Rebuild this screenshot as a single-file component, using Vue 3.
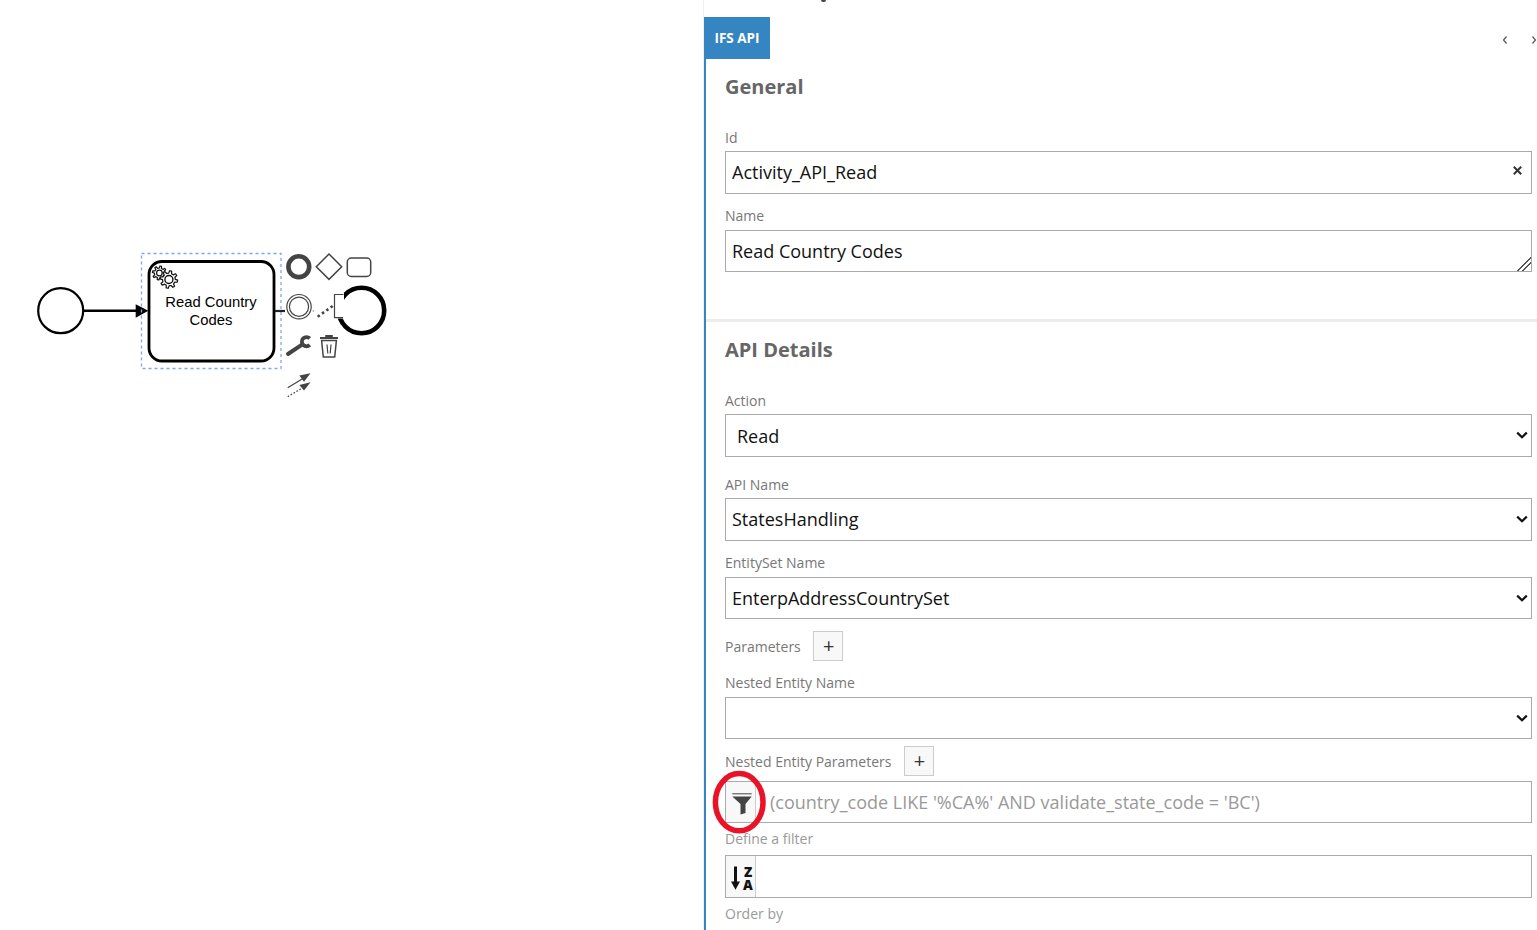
<script setup>
const gear = (cx, cy, ro, ri, n) => {
  const pts = []
  const step = (Math.PI * 2) / n
  for (let i = 0; i < n; i++) {
    const a = i * step + step / 4
    const w = step * 0.22
    const p = (r, t) => `${(cx + r * Math.cos(t)).toFixed(2)} ${(cy + r * Math.sin(t)).toFixed(2)}`
    pts.push(p(ri, a - w * 1.3), p(ro, a - w * 0.7), p(ro, a + w * 0.7), p(ri, a + w * 1.3))
  }
  return 'M' + pts.join('L') + 'Z'
}
const gearBack = gear(159.4, 273, 7, 5, 8)
const gearFront = gear(168.9, 279.5, 8.8, 6.4, 8)
</script>

<template>
  <div class="page">
    <div class="canvas">
      <svg class="diagram" width="703" height="930" viewBox="0 0 703 930">
        <circle cx="60.7" cy="310.7" r="22.5" class="ev" />
        <path d="M84 310.7H138" class="flow" />
        <path d="M135.7 304.3V317.7L148.3 310.7Z" fill="#000" />
        <rect x="149" y="261.5" width="125" height="99.5" rx="13" class="task" />
        <path :d="gearBack" class="gear" />
        <circle cx="159.4" cy="273" r="2.8" class="gear" />
        <path :d="gearFront" class="gear" />
        <circle cx="168.9" cy="279.5" r="4" class="gear hub" />
        <text x="211" y="307" class="label">Read Country</text>
        <text x="211" y="325" class="label">Codes</text>
        <rect x="141.5" y="253.5" width="139.5" height="115" class="select-box" />
        <path d="M275 311H285" stroke="#222" stroke-width="2.2" fill="none" />

        <circle cx="361.5" cy="310.5" r="22.7" class="end" />
        <rect x="331" y="293" width="13" height="25.5" fill="#fff" />
        <path d="M343.5 294.5H334.5V317.7H343" class="pad thin" />

        <circle cx="298.8" cy="266.7" r="10.4" fill="#fff" stroke="#444" stroke-width="4.6" />
        <path d="M329 254L341.7 266.7L329 279.4L316.3 266.7Z" class="pad" />
        <rect x="347.3" y="258" width="23.4" height="18.4" rx="4" class="pad" />
        <circle cx="299" cy="306.7" r="12.2" class="pad thin" />
        <circle cx="299" cy="306.7" r="9.6" class="pad thin" />
        <path d="M313.3 311h.1" stroke="#999" stroke-width="1.6" stroke-linecap="round" />
        <path d="M317.7 316.7L333 305.8" stroke="#444" stroke-width="2.6" stroke-dasharray="2.5 2.8" fill="none" />

        <path d="M288 354L302 344.6" stroke="#444" stroke-width="4" stroke-linecap="round" fill="none" />
        <path d="M309.75 338.45A4.6 4.6 0 1 0 309.75 344.95" stroke="#444" stroke-width="3.8" fill="none" />

        <path d="M325.2 338V335H332.8V338Z" fill="#444" />
        <path d="M320 338H338" stroke="#444" stroke-width="2" />
        <path d="M321.6 340.5L323.3 357H334.7L336.4 340.5Z" class="pad body-stroke" />
        <path d="M327 344.5L327.8 353.5M331 344.5L330.2 353.5" stroke="#444" stroke-width="1.2" fill="none" />

        <path d="M287.7 387.7L303 378.4" stroke="#444" stroke-width="1.2" fill="none" />
        <path d="M310.5 373.3L299.3 375.4L304 381.8Z" fill="#444" />
        <path d="M287.7 396.7L303 387.5" stroke="#444" stroke-width="1.2" stroke-dasharray="1.6 1.8" fill="none" />
        <path d="M310.5 382.3L299.3 385L304 390.5Z" fill="#444" />
      </svg>
    </div>

    <aside class="panel">
      <span class="clip-mark"></span>
      <div class="tabs">
        <div class="tab">IFS API</div>
        <div class="arrows">
          <svg width="6" height="10" viewBox="0 0 6 10"><path d="M4.5 1.5L1.5 5L4.5 8.5" /></svg>
          <svg width="6" height="10" viewBox="0 0 6 10"><path d="M1.5 1.5L4.5 5L1.5 8.5" /></svg>
        </div>
      </div>

      <div class="body">
        <section class="group general">
          <h2 class="title">General</h2>
          <div class="field">
            <label class="lbl" for="f-id">Id</label>
            <div class="clearable">
              <input id="f-id" class="ctl" type="text" value="Activity_API_Read" />
              <svg class="clear" width="9" height="9" viewBox="0 0 9 9"><path d="M.8.8L8.2 8.2M8.2.8L.8 8.2" /></svg>
            </div>
          </div>
          <div class="field">
            <label class="lbl" for="f-name">Name</label>
            <textarea id="f-name" class="ctl area">Read Country Codes</textarea>
          </div>
        </section>

        <section class="group api">
          <h2 class="title">API Details</h2>
          <div class="field action">
            <label class="lbl" for="f-action">Action</label>
            <select id="f-action" class="ctl sel wide"><option>Read</option></select>
          </div>
          <div class="field api-name">
            <label class="lbl" for="f-api">API Name</label>
            <select id="f-api" class="ctl sel up"><option>StatesHandling</option></select>
          </div>
          <div class="field tight">
            <label class="lbl" for="f-set">EntitySet Name</label>
            <select id="f-set" class="ctl sel"><option>EnterpAddressCountrySet</option></select>
          </div>
          <div class="row params">
            <span class="lbl">Parameters</span>
            <button class="plus" type="button">+</button>
          </div>
          <div class="field tight nested">
            <label class="lbl" for="f-nested">Nested Entity Name</label>
            <select id="f-nested" class="ctl sel"><option></option></select>
          </div>
          <div class="row nested-params">
            <span class="lbl">Nested Entity Parameters</span>
            <button class="plus" type="button">+</button>
          </div>
          <div class="igroup filter">
            <span class="addon">
              <svg width="22" height="26" viewBox="0 0 22 26">
                <path d="M2.3 4.8H21.7" stroke="#444" stroke-width="1" fill="none" />
                <path d="M2.3 7.5H21.7L15.5 15V24L10.5 25.5V15Z" fill="#444" />
              </svg>
            </span>
            <input class="bare" type="text" placeholder="(country_code LIKE '%CA%' AND validate_state_code = 'BC')" />
          </div>
          <div class="hint first">Define a filter</div>
          <div class="igroup order">
            <span class="addon">
              <svg width="22" height="28" viewBox="0 0 22 28">
                <path d="M5.5 4.5V20" stroke="#111" stroke-width="3" fill="none" />
                <path d="M1 19.5H10L5.5 27.7Z" fill="#111" />
                <text x="18" y="15" class="sort-letter">Z</text>
                <text x="18" y="28" class="sort-letter">A</text>
              </svg>
            </span>
            <input class="bare" type="text" />
          </div>
          <div class="hint second">Order by</div>
        </section>
      </div>

      <svg class="ring" width="60" height="68" viewBox="0 0 60 68">
        <ellipse cx="28.2" cy="33.2" rx="23.8" ry="28.6" />
      </svg>
    </aside>
  </div>
</template>

<style scoped>
.page {
  display: flex;
  height: 930px;
  overflow: hidden;
  background: #fff;
  font-family: "Open Sans", "Liberation Sans", sans-serif;
}
.canvas {
  box-sizing: border-box;
  width: 704px;
  flex: none;
  border-right: 1px solid #eee;
}
.diagram { display: block; }
.ev { fill: #fff; stroke: #000; stroke-width: 2.2; }
.flow { stroke: #000; stroke-width: 2.4; fill: none; }
.task { fill: #fff; stroke: #000; stroke-width: 2.8; }
.gear { fill: #fff; stroke: #111; stroke-width: 1.2; stroke-linejoin: round; }
.gear.hub { stroke-width: 1.4; }
.label { font-family: "Liberation Sans", Arial, sans-serif; font-size: 14.8px; text-anchor: middle; fill: #000; }
.select-box { fill: none; stroke: #7fa6f5; stroke-width: 1.3; stroke-dasharray: 3 3; }
.end { fill: #fff; stroke: #000; stroke-width: 4.6; }
.pad { fill: #fff; stroke: #444; stroke-width: 1.5; }
.pad.thin { fill: none; stroke-width: 1.2; }
.pad.body-stroke { fill: none; stroke-width: 1.5; }

.panel {
  position: relative;
  flex: 1;
  min-width: 0;
  display: flex;
  flex-direction: column;
  padding-top: 17px;
}
.clip-mark {
  position: absolute;
  left: 117px;
  top: 0;
  width: 5px;
  height: 1.5px;
  border-radius: 0 0 2px 2px;
  background: #444;
}
.tabs {
  display: flex;
  align-items: center;
  justify-content: space-between;
  height: 42px;
  flex: none;
}
.tab {
  width: 66px;
  height: 42px;
  line-height: 42px;
  text-align: center;
  background: #3485c2;
  color: #fff;
  font-size: 13.5px;
  font-weight: 700;
}
.arrows { display: flex; gap: 23px; margin-top: 4px; }
.arrows svg { display: block; }
.arrows path { fill: none; stroke: #555; stroke-width: 1.2; }

.body {
  flex: 1;
  border-left: 2px solid #3485c2;
  min-height: 0;
}
.group { padding: 0 5px 0 19px; }
.general {
  padding-top: 14px;
  height: 246px;
  border-bottom: 3px solid #ececec;
}
.api { padding-top: 14px; }
.title {
  margin: 0;
  height: 28px;
  line-height: 28px;
  font-size: 20px;
  font-weight: 700;
  color: #666;
}
.general .title { margin-bottom: 26.8px; }
.api .title { margin-bottom: 26.8px; }
.field { margin-bottom: 12.8px; }
.field.action { margin-bottom: 18.4px; }
.field.api-name { margin-bottom: 12.4px; }
.field.tight { margin-bottom: 12px; }
.field.nested { margin-bottom: 7px; }
.lbl {
  display: block;
  height: 20px;
  line-height: 20px;
  margin-bottom: 3.4px;
  font-size: 14px;
  color: #777;
}
.clearable { position: relative; }
.clear { position: absolute; right: 10px; top: 15px; }
.clear path { fill: none; stroke: #333; stroke-width: 2; }
.ctl {
  display: block;
  box-sizing: border-box;
  width: 100%;
  height: 42.4px;
  padding: 0 6px;
  border: 1px solid #aaa;
  border-radius: 0;
  background: #fff;
  color: #111;
  font-family: inherit;
  font-size: 18px;
  outline: none;
}
.area { padding-top: 7px; line-height: 26px; resize: vertical; }
.area::-webkit-resizer {
  background: linear-gradient(135deg, transparent 51%, #555 51%, #555 59%, transparent 59%, transparent 68%, #555 68%, #555 76%, transparent 76%);
}
.sel {
  appearance: none;
  padding: 0 24px 0 6px;
  background: #fff url("data:image/svg+xml,%3Csvg xmlns='http://www.w3.org/2000/svg' width='12' height='8' viewBox='0 0 12 8'%3E%3Cpath d='M1.2 1.6L6 6.2L10.8 1.6' fill='none' stroke='%23111' stroke-width='2.2'/%3E%3C/svg%3E") no-repeat right 3.5px center;
}
.sel.wide { padding: 2px 24px 0 11px; }
.sel.up { padding-bottom: 2px; background-position: right 3.5px top 16px; }
.row { display: flex; align-items: center; gap: 12px; }
.row .lbl { margin: 2px 0 0; }
.row.params { margin-bottom: 12.4px; }
.row.nested-params { margin-bottom: 4.8px; gap: 13px; }
.row.nested-params .plus { padding-left: 0; }
.plus {
  box-sizing: border-box;
  width: 30px;
  height: 30px;
  padding: 0 0 0 2px;
  border: 1px solid #ccc;
  background: #f8f8f8;
  color: #333;
  font-family: inherit;
  font-size: 20px;
  line-height: 26px;
}
.igroup {
  display: flex;
  box-sizing: border-box;
  height: 42.4px;
  border: 1px solid #aaa;
}
.igroup.order { height: 42.6px; }
.addon {
  flex: none;
  box-sizing: border-box;
  width: 30px;
  display: flex;
  align-items: center;
  justify-content: center;
  border-right: 1px solid #ccc;
  background: #f8f8f8;
}
.addon svg { display: block; overflow: visible; }
.sort-letter { font-size: 13.5px; font-weight: 800; text-anchor: middle; fill: #111; }
.bare {
  flex: 1;
  min-width: 0;
  padding: 0 14px;
  border: 0;
  outline: none;
  background: transparent;
  color: #111;
  font-family: inherit;
  font-size: 18px;
}
.bare::placeholder { color: #999; opacity: 1; }
.hint {
  height: 20px;
  line-height: 20px;
  font-size: 14px;
  color: #999;
}
.hint.first { margin: 5.6px 0 6.2px; }
.hint.second { margin-top: 6.2px; }
.ring {
  position: absolute;
  left: 7px;
  top: 769px;
  pointer-events: none;
}
.ring ellipse { fill: none; stroke: #ea1226; stroke-width: 5.5; }
</style>

<style>
html, body { margin: 0; background: #fff; overflow: hidden; }
</style>
